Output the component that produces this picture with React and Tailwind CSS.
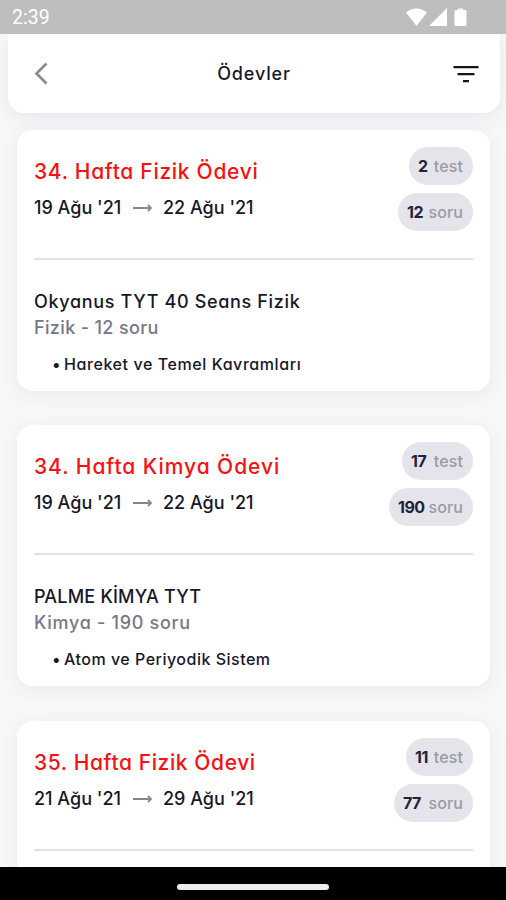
const assignments = [
  {
    title: "34. Hafta Fizik Ödevi",
    titleTracking: "tracking-[0.7px]",
    start: "19 Ağu '21",
    end: "22 Ağu '21",
    tests: "2",
    testWidth: "w-16",
    questions: "12",
    questionWidth: "w-[75px]",
    book: "Okyanus TYT 40 Seans Fizik",
    bookTracking: "tracking-[0.66px]",
    subject: "Fizik - 12 soru",
    subjectTracking: "tracking-[0.35px]",
    topic: "Hareket ve Temel Kavramları",
    topicTracking: "tracking-[0.58px]",
  },
  {
    title: "34. Hafta Kimya Ödevi",
    titleTracking: "tracking-[0.95px]",
    start: "19 Ağu '21",
    end: "22 Ağu '21",
    tests: "17",
    testWidth: "w-[71px]",
    questions: "190",
    questionWidth: "w-[84px]",
    book: "PALME KİMYA TYT",
    bookTracking: "tracking-[0.2px]",
    subject: "Kimya - 190 soru",
    subjectTracking: "tracking-[0.7px]",
    topic: "Atom ve Periyodik Sistem",
    topicTracking: "tracking-[0.5px]",
  },
  {
    title: "35. Hafta Fizik Ödevi",
    titleTracking: "tracking-[0.6px]",
    start: "21 Ağu '21",
    end: "29 Ağu '21",
    tests: "11",
    testWidth: "w-[67px]",
    questions: "77",
    questionWidth: "w-[79px]",
  },
];

function StatusBar() {
  return (
    <div className="relative z-10 flex h-[34px] shrink-0 items-center justify-between bg-[#bebebe] pl-3 pr-[37px] pt-0.5 text-white">
      <span className="font-[Roboto,sans-serif] text-[19.5px] leading-none">2:39</span>
      <svg width="64" height="20" viewBox="0 0 64 20" fill="currentColor">
        <path d="M1 4.5Q11.5-3.5 22 4.5L11.5 18Z" />
        <path d="M24 18 42 0V18Z" />
        <path d="M53 2V0.500h5V2h2.200q1.300 0 1.300 1.300V16.700q0 1.300-1.300 1.300h-9.400q-1.300 0-1.300-1.300V3.300Q49.500 2 50.800 2Z" />
      </svg>
    </div>
  );
}

function Header() {
  return (
    <header className="ml-2 mr-1.5 flex h-[79px] shrink-0 items-center justify-between rounded-b-2xl bg-white pl-[26px] pr-[21px] shadow-[0_4px_20px_rgba(60,60,110,0.09)]">
      <svg width="14" height="23" viewBox="0 0 14 23" fill="none" stroke="#898993" strokeWidth="2.7">
        <path d="M12.500 1.500 2.500 11.500 12.500 21.500" />
      </svg>
      <h1 className="pl-[7px] text-[18px] font-medium leading-none tracking-[0.85px]">Ödevler</h1>
      <svg width="26" height="18" viewBox="0 0 26 18" fill="#15151c">
        <path d="M0.500 1h25v2.200h-25zM4.500 8h17v2.200h-17zM10 15h6v2.200h-6z" />
      </svg>
    </header>
  );
}

function Pill({ value, unit, width }) {
  return (
    <div className={`flex h-[38px] items-center justify-between rounded-full bg-[#e4e4ea] pl-[9px] pr-2.5 text-[16px] leading-none ${width}`}>
      <span className="font-bold tracking-[-0.5px] text-[#22223a]">{value}</span>
      <span className="font-medium tracking-[0.1px] text-[#9a9aa8]">{unit}</span>
    </div>
  );
}

function Card({ item }) {
  return (
    <article className="h-[261px] shrink-0 rounded-2xl bg-white px-[17px] pt-[17px] shadow-[0_4px_20px_rgba(60,60,110,0.08)]">
      <div className="flex h-[113px] justify-between border-b-2 border-[#e2e2e5]">
        <div className="pt-[13px] whitespace-nowrap">
          <h2 className={`text-[21px] font-medium leading-6 text-[#fa1010] ${item.titleTracking}`}>{item.title}</h2>
          <div className="mt-3 flex items-center text-[18px] font-medium leading-6">
            <span className="w-[99px]">{item.start}</span>
            <svg width="20" height="10" viewBox="0 0 20 10" fill="none" stroke="#85859a" strokeWidth="1.8">
              <path d="M0 5H18M15 2 18 5 15 8" />
            </svg>
            <span className="pl-[10px]">{item.end}</span>
          </div>
        </div>
        <div className="flex flex-col items-end gap-2">
          <Pill value={item.tests} unit="test" width={item.testWidth} />
          <Pill value={item.questions} unit="soru" width={item.questionWidth} />
        </div>
      </div>
      {item.book && (
        <div className="whitespace-nowrap pt-[29px]">
          <h3 className={`text-[18px] font-medium leading-[26px] ${item.bookTracking}`}>{item.book}</h3>
          <p className={`text-[18px] font-medium leading-[26px] text-[#777789] ${item.subjectTracking}`}>{item.subject}</p>
          <p className="mt-[11px] flex pl-[18px] text-[16px] font-medium leading-6">
            <span className="w-3">•</span>
            <span className={item.topicTracking}>{item.topic}</span>
          </p>
        </div>
      )}
    </article>
  );
}

export default function App() {
  return (
    <div className="flex h-[900px] w-[506px] flex-col overflow-hidden bg-[#f8f8f9] font-[Inter,sans-serif] text-[#17172a] [font-feature-settings:'cv11']">
      <StatusBar />
      <Header />
      <main className="flex min-h-0 flex-1 flex-col gap-[34.400px] overflow-hidden pl-[17px] pr-4 pt-[17px]">
        {assignments.map((item) => (
          <Card key={item.title} item={item} />
        ))}
      </main>
      <nav className="relative z-10 flex h-[33px] shrink-0 items-center justify-center bg-black pt-1.5">
        <div className="h-1.5 w-[152px] rounded-full bg-[#ededed]" />
      </nav>
    </div>
  );
}
